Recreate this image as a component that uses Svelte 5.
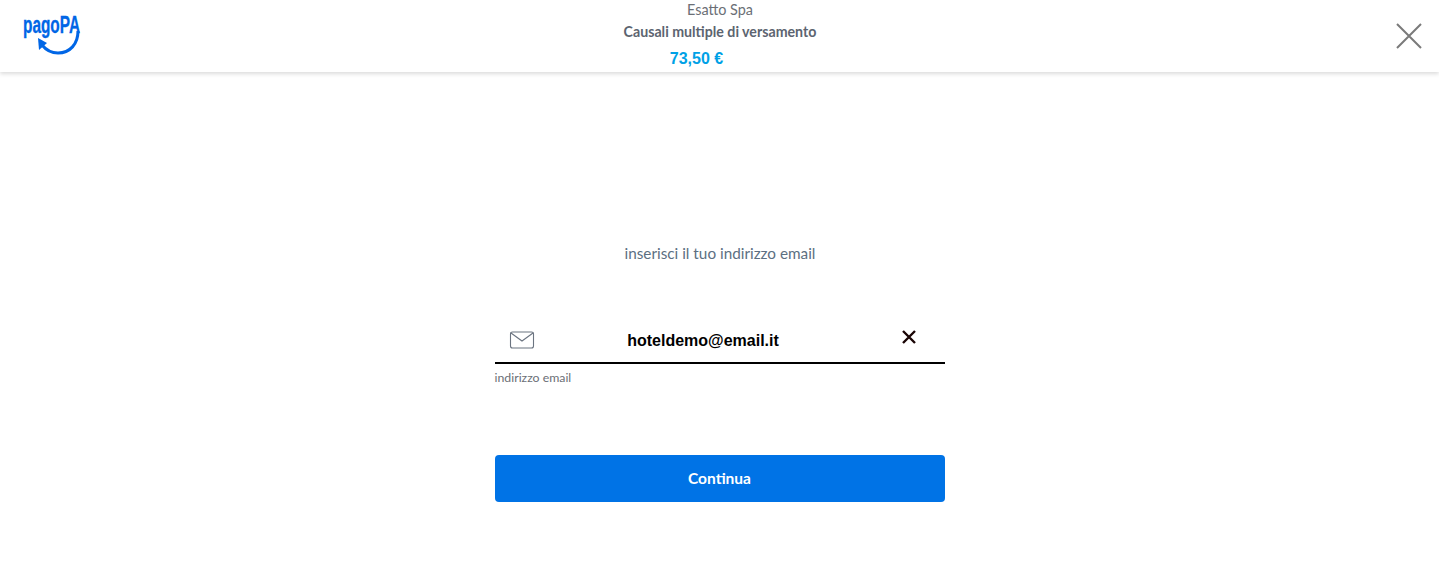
<script lang="ts">
  const payee = 'Esatto Spa';
  const reason = 'Causali multiple di versamento';
  const amount = '73,50 €';
  let email = $state('hoteldemo@email.it');
</script>

<header class="topbar">
  <a class="logo" href="#top" aria-label="pagoPA">
    <svg width="58" height="38" viewBox="0 0 58 38">
      <text x="0" y="16" class="logo-text" textLength="57" lengthAdjust="spacingAndGlyphs">pagoPA</text>
      <path d="M55 14 C55 27 47 36 35 36 C28 36 23 33 19 28" fill="none" stroke="#0066e6" stroke-width="3" />
      <path d="M15 21 L24 26 L16 33 Z" fill="#0066e6" />
    </svg>
  </a>

  <div class="summary">
    <div class="payee">{payee}</div>
    <div class="reason">{reason}</div>
    <div class="amount">{amount}</div>
  </div>

  <button class="close" aria-label="Chiudi">
    <svg width="26" height="26" viewBox="0 0 26 26">
      <path d="M1 1 L25 25 M25 1 L1 25" stroke="#7a7a7a" stroke-width="2" fill="none" />
    </svg>
  </button>
</header>

<main class="content">
  <p class="prompt">inserisci il tuo indirizzo email</p>

  <form class="form" onsubmit={(e) => e.preventDefault()}>
    <div class="field">
      <svg class="mail" width="26" height="18" viewBox="0 0 26 18">
        <rect x="1.5" y="1" width="23" height="16" rx="2" fill="none" stroke="#6b7480" stroke-width="1.1" />
        <path d="M2 2 L13 10 L24 2" fill="none" stroke="#6b7480" stroke-width="1.1" />
      </svg>
      <input class="email" type="text" bind:value={email} />
      <button type="button" class="clear" aria-label="Cancella" onclick={() => (email = '')}>
        <svg width="16" height="16" viewBox="0 0 16 16">
          <path d="M2 2 L14 14 M14 2 L2 14" stroke="#1a0505" stroke-width="2.4" fill="none" />
        </svg>
      </button>
    </div>
    <label class="hint" for="">indirizzo email</label>
    <button class="submit" type="submit">Continua</button>
  </form>
</main>

<style>
  :global(body) {
    background: #fff;
    font-family: "Open Sans", "Noto Sans", sans-serif;
    color: #5c6f82;
  }

  .topbar {
    height: 72px;
    display: grid;
    grid-template-columns: 1fr auto 1fr;
    align-items: start;
    box-shadow: 0 2px 4px rgba(0, 0, 0, 0.14);
  }

  .logo {
    justify-self: start;
    display: block;
    margin: 17px 0 0 23px;
    height: 38px;
  }

  .logo svg {
    overflow: visible;
  }

  .logo-text {
    font-family: "Liberation Sans", sans-serif;
    font-weight: 700;
    font-size: 23px;
    fill: #0066e6;
    stroke: #0066e6;
    stroke-width: 0.3px;
  }

  .summary {
    text-align: center;
    padding-left: 1px;
  }

  .payee {
    font-family: Lato, sans-serif;
    font-size: 14.4px;
    line-height: 19px;
    color: #6b6f76;
  }

  .reason {
    font-family: Lato, sans-serif;
    font-size: 14.2px;
    font-weight: 700;
    line-height: 19px;
    margin-top: 3px;
    color: #5c6470;
  }

  .amount {
    font-family: "Liberation Sans", Arial, sans-serif;
    font-size: 16px;
    font-weight: 700;
    line-height: 20px;
    margin-top: 8px;
    padding-right: 47px;
    color: #00a1e6;
  }

  .close {
    justify-self: end;
    margin: 23px 17px 0 0;
    padding: 0;
    border: 0;
    background: none;
    line-height: 0;
  }

  .content {
    display: flex;
    flex-direction: column;
    align-items: center;
    padding-top: 170px;
  }

  .prompt {
    margin: 0;
    padding-left: 1px;
    font-family: Lato, sans-serif;
    font-size: 15.3px;
    line-height: 22px;
    color: #5c6f82;
  }

  .form {
    width: 450px;
    margin-top: 57px;
  }

  .field {
    box-sizing: border-box;
    height: 43px;
    display: flex;
    align-items: center;
    border-bottom: 2px solid #000;
    padding: 0 28px 4px 14px;
  }

  .mail {
    flex: none;
  }

  .email {
    flex: 1;
    min-width: 0;
    border: 0;
    outline: 0;
    padding: 2px 29px 0 0;
    text-align: center;
    font-family: "Liberation Sans", Arial, sans-serif;
    font-size: 16px;
    font-weight: 700;
    color: #000;
    background: none;
  }

  .clear {
    flex: none;
    padding: 0;
    border: 0;
    margin-bottom: 5px;
    background: none;
    line-height: 0;
  }

  .hint {
    display: block;
    margin-top: 6px;
    font-family: Lato, sans-serif;
    font-size: 12.3px;
    line-height: 16px;
    color: #6b6f76;
  }

  .submit {
    display: block;
    width: 100%;
    height: 47px;
    margin-top: 69px;
    padding: 0 0 2px;
    border: 0;
    border-radius: 4px;
    background: #0073e6;
    color: #fff;
    font-family: Lato, sans-serif;
    font-size: 15.5px;
    font-weight: 700;
  }
</style>
